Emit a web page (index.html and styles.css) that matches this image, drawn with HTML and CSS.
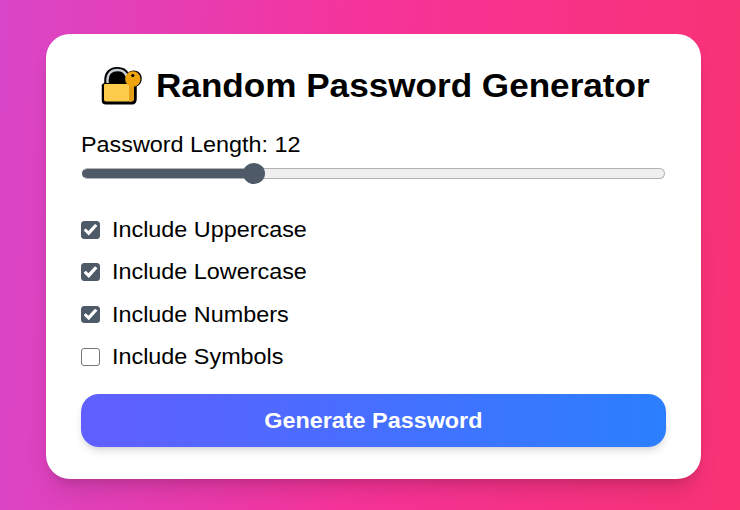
FILE: index.html
```
<!DOCTYPE html>
<html lang="en">
<head>
<meta charset="utf-8">
<title>Random Password Generator</title>
<link rel="stylesheet" href="styles.css">
</head>
<body>
<main class="card">
  <h1 class="title">
    <svg class="lock" viewBox="0 0 42 42" aria-hidden="true">
      <path d="M4 18V15C4 7 9 2.700 16.500 2.700c5.500 0 9 2.500 10.500 6 3-4 12-3.500 13 4 .5 5-3 8-5 8v13c0 4-2 5-4 5H5c-2.500 0-3.500-1-3.500-3V20z" fill="#000" stroke="#000" stroke-width="1.500"/>
      <path d="M6.500 18v-3C6.500 9 10 5 16.500 5c5 0 8 3 9 6" fill="none" stroke="#c9ced2" stroke-width="2.400"/>
      <path d="M3 20q0-1 1-1h29v14.500q0 3-3 3H5q-2 0-2-2z" fill="#fccb4b"/>
      <path d="M28 19h5v14.500q0 3-3 3h-2z" fill="#e4a019"/>
      <circle cx="31.800" cy="14" r="7.700" fill="#eea40e"/>
      <circle cx="31.800" cy="10.500" r="1.600" fill="#000"/>
    </svg>
    <span class="title-text">Random Password Generator</span>
  </h1>
  <label class="length-label" for="length"><span class="text">Password Length: 12</span></label>
  <input class="slider" id="length" type="range" min="4" max="32" value="12">
  <div class="options">
    <label class="option"><input class="check" type="checkbox" checked><span class="text">Include Uppercase</span></label>
    <label class="option"><input class="check" type="checkbox" checked><span class="text">Include Lowercase</span></label>
    <label class="option"><input class="check" type="checkbox" checked><span class="text">Include Numbers</span></label>
    <label class="option"><input class="check" type="checkbox"><span class="text">Include Symbols</span></label>
  </div>
  <button class="generate"><span class="text centered">Generate Password</span></button>
</main>
</body>
</html>
```
FILE: styles.css
```
* { box-sizing: border-box; }
body {
  margin: 0;
  height: 510px;
  overflow: hidden;
  padding: 34px 39px 0 46px;
  background: linear-gradient(93deg, #d946c8, #f63399 49%, #f93274);
  font-family: "Liberation Sans", Arial, sans-serif;
  color: #000;
}
.card {
  height: 445px;
  padding: 32px 35px;
  border-radius: 24px;
  background: #fff;
  box-shadow: 0 16px 22px -4px rgba(0,0,0,.12), 0 7px 9px -5px rgba(0,0,0,.12);
}
.title {
  display: flex;
  align-items: center;
  margin: 0 0 25px;
  padding-left: 20px;
  height: 40px;
  font-size: 33px;
  white-space: nowrap;
}
.lock { width: 42px; height: 42px; margin-right: 13px; }
.title-text { transform: scaleX(1.064); transform-origin: left center; }
.text { display: inline-block; transform: scaleX(1.087); transform-origin: left center; }
.centered { padding-top: 2px; transform-origin: center; }
.length-label { display: block; height: 28px; line-height: 28px; font-size: 21.500px; }
.slider {
  appearance: none;
  display: block;
  width: 583px;
  height: 24px;
  margin: 2px 0 0 1px;
  background: none;
}
.slider::-webkit-slider-runnable-track {
  height: 11px;
  border: 1px solid #b2b2b2;
  border-radius: 6px;
  background: linear-gradient(to right, #4f5a69 172px, #efefef 172px) border-box;
  border-left-color: #4f5a69;
}
.slider::-webkit-slider-thumb {
  appearance: none;
  width: 22px;
  height: 21px;
  margin-top: -6px;
  border-radius: 50%;
  background: #4f5a69;
}
.options { display: grid; grid-auto-rows: 42.400px; margin-top: 23.600px; }
.option { display: flex; align-items: center; font-size: 21.500px; }
.option .text { padding-top: 1px; }
.check {
  appearance: none;
  width: 19px;
  height: 17.500px;
  margin: 0 12px 0 0;
  border: 1px solid #767676;
  border-radius: 3px;
  background: #fff;
}
.check:checked {
  display: grid;
  place-items: center;
  border-color: #4f5a69;
  background: #4f5a69;
}
.check:checked::before {
  content: "";
  width: 14px;
  height: 12px;
  background: #fff;
  clip-path: polygon(0 54%, 17% 39%, 35% 60%, 82% 1%, 100% 17%, 38% 98%);
}
.generate {
  display: block;
  width: 585px;
  height: 53px;
  margin-top: 16px;
  border: 0;
  border-radius: 18px;
  color: #fff;
  background: linear-gradient(to right, #615fff, #2b7fff);
  box-shadow: 0 5px 8px -1px rgba(0,0,0,.12), 0 3px 5px -3px rgba(0,0,0,.12);
  font: bold 21.500px "Liberation Sans", Arial, sans-serif;
}
```
